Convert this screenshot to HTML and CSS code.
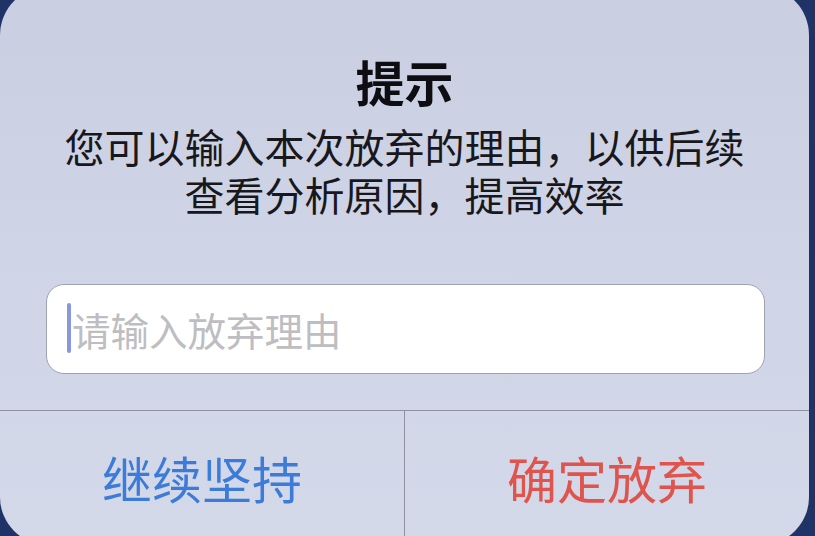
FILE: index.html
```html
<!DOCTYPE html>
<html lang="zh">
<head>
<meta charset="utf-8">
<link rel="stylesheet" href="styles.css">
</head>
<body>
<div class="alert">
  <div class="head">
    <div class="title">提示</div>
    <div class="message">
      <div class="line">您可以输入本次放弃的理由，以供后续</div>
      <div class="line">查看分析原因，提高效率</div>
    </div>
  </div>
  <div class="field">
    <span class="caret"></span><span class="placeholder">请输入放弃理由</span>
  </div>
  <div class="actions">
    <div class="btn btn-keep">继续坚持</div>
    <div class="btn btn-quit">确定放弃</div>
  </div>
</div>
</body>
</html>
```
FILE: styles.css
```css
html, body {
  margin: 0;
  padding: 0;
}
body {
  width: 815px;
  height: 536px;
  overflow: hidden;
  background: #203366;
  font-family: "Noto Sans CJK SC", "Noto Sans", sans-serif;
}
.alert {
  width: 809px;
  height: 558px;
  margin-top: -13px;
  border-radius: 48px;
  background: linear-gradient(180deg, #c9cee0 0%, #cfd4e6 50%, #d4d9ea 100%);
  display: flex;
  flex-direction: column;
}
.head {
  padding-top: 64px;
  text-align: center;
}
.title {
  font-size: 49px;
  line-height: 60px;
  font-weight: 700;
  color: #0e0e12;
}
.message {
  margin-top: 11px;
  display: flex;
  flex-direction: column;
  align-items: center;
}
.line {
  font-size: 40px;
  line-height: 48px;
  height: 48px;
  color: #18181c;
  white-space: nowrap;
}
.field {
  margin: 66px 0 0 46px;
  width: 719px;
  height: 90px;
  box-sizing: border-box;
  border: 1.5px solid #9ea2ae;
  border-radius: 18px;
  background: #ffffff;
  display: flex;
  align-items: center;
  padding-left: 20px;
}
.caret {
  width: 4px;
  height: 50px;
  background: #8b97dc;
  border-radius: 2px;
  margin-right: 1px;
  margin-top: -2px;
}
.placeholder {
  font-size: 38.5px;
  line-height: 50px;
  color: #bdbdc2;
  white-space: nowrap;
}
.actions {
  margin-top: 36px;
  border-top: 1.5px solid #8e929f;
  display: grid;
  grid-template-columns: 405px 1fr;
  flex: 1;
}
.btn {
  text-align: center;
  font-size: 50px;
  line-height: 60px;
  padding-top: 36px;
}
.btn-keep {
  color: #3c7bd7;
  border-right: 1.5px solid #8e929f;
}
.btn-quit {
  color: #df544d;
}
```
